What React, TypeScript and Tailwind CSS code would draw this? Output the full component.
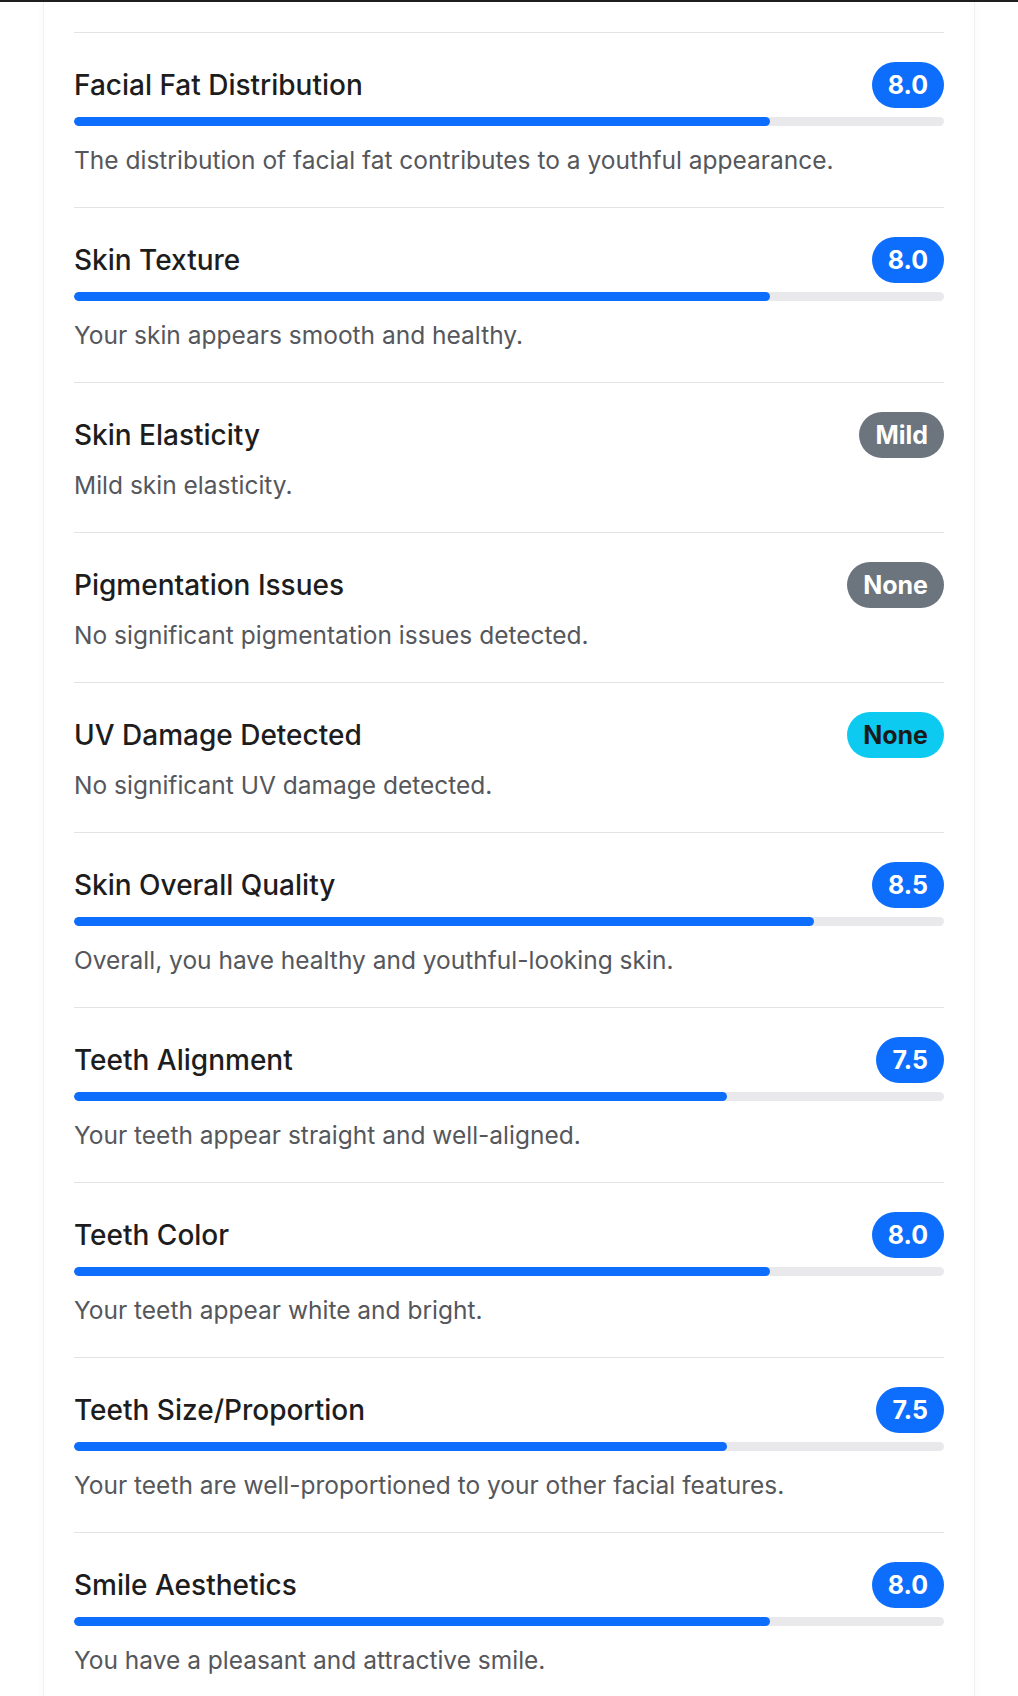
import React from 'react';

type Item={title:string;badge:string;kind:'score'|'gray'|'info';score?:number;desc:string};

const items:Item[]=[
  {title:'Facial Fat Distribution',badge:'8.0',kind:'score',score:8.0,desc:'The distribution of facial fat contributes to a youthful appearance.'},
  {title:'Skin Texture',badge:'8.0',kind:'score',score:8.0,desc:'Your skin appears smooth and healthy.'},
  {title:'Skin Elasticity',badge:'Mild',kind:'gray',desc:'Mild skin elasticity.'},
  {title:'Pigmentation Issues',badge:'None',kind:'gray',desc:'No significant pigmentation issues detected.'},
  {title:'UV Damage Detected',badge:'None',kind:'info',desc:'No significant UV damage detected.'},
  {title:'Skin Overall Quality',badge:'8.5',kind:'score',score:8.5,desc:'Overall, you have healthy and youthful-looking skin.'},
  {title:'Teeth Alignment',badge:'7.5',kind:'score',score:7.5,desc:'Your teeth appear straight and well-aligned.'},
  {title:'Teeth Color',badge:'8.0',kind:'score',score:8.0,desc:'Your teeth appear white and bright.'},
  {title:'Teeth Size/Proportion',badge:'7.5',kind:'score',score:7.5,desc:'Your teeth are well-proportioned to your other facial features.'},
  {title:'Smile Aesthetics',badge:'8.0',kind:'score',score:8.0,desc:'You have a pleasant and attractive smile.'},
];

const badgeCls={
  score:'bg-[#0d6efd] text-white',
  gray:'bg-[#6c757d] text-white',
  info:'bg-[#0dcaf0] text-[#1a1a1a]',
};

function Row({it}:{it:Item}){
  return(
    <div className="border-t border-[#e3e3e6] pt-[29px] pb-[32px]">
      <div className="flex items-center justify-between h-[46px]">
        <h5 className="text-[28px] font-medium text-[#1d1d20] leading-none">{it.title}</h5>
        <span className={`h-[46px] px-4 rounded-full flex items-center text-[25px] font-bold leading-none ${badgeCls[it.kind]}`}>{it.badge}</span>
      </div>
      {it.score!==undefined&&(
        <div className="mt-[9px] h-[9px] rounded-full bg-[#e9e9ec] overflow-hidden">
          <div className="h-full bg-[#0d6efd] rounded-full" style={{width:`${it.score*10}%`}}/>
        </div>
      )}
      <p className={`${it.score!==undefined?'mt-[19px]':'mt-[12px]'} text-[24.5px] leading-[30px] text-[#55575c]`}>{it.desc}</p>
    </div>
  );
}

export default function App(){
  return(
    <div className="min-h-[1696px] bg-white" style={{fontFamily:'Inter, "Noto Sans", sans-serif'}}>
      <div className="h-[2px] bg-[#1f1f1f]"/>
      <div className="mx-[43px] bg-white border-x border-[#f0f0f2] shadow-[0_0_10px_rgba(0,0,0,0.03)] px-[30px] pt-[30px] min-h-[1694px]">
        {items.map(it=><Row key={it.title} it={it}/>)}
      </div>
    </div>
  );
}
